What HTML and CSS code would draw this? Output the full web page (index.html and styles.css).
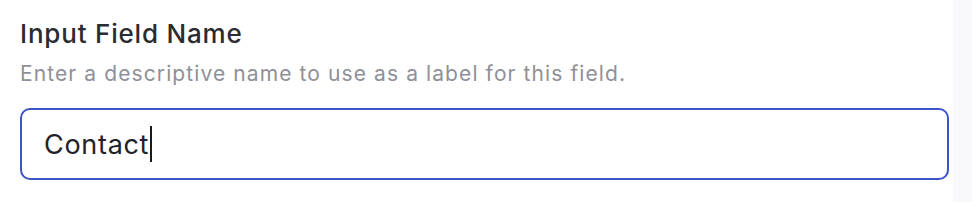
FILE: index.html
```html
<!DOCTYPE html>
<html lang="en">
<head>
    <meta charset="UTF-8">
    <meta name="viewport" content="width=device-width, initial-scale=1.0">
    <title>Input Field Name</title>
    <link rel="stylesheet" href="styles.css">
</head>
<body>
    <div class="panel">
        <div class="field">
            <label class="field-label" for="fieldName">Input Field Name</label>
            <p class="field-help">Enter a descriptive name to use as a label for this field.</p>
            <div class="field-input">
                <span class="field-value">Contact</span><span class="caret"></span>
            </div>
        </div>
        <div class="side"></div>
    </div>
</body>
</html>
```

FILE: styles.css
```css
body {
    margin: 0;
    font-family: Inter, "Noto Sans", sans-serif;
    background-color: #ffffff;
}
.panel {
    display: flex;
    height: 202px;
}
.field {
    width: 953px;
    padding: 19px 4px 0 20px;
    box-sizing: border-box;
}
.side {
    flex: 1;
    background-color: #f9f9fb;
}
.field-label {
    display: block;
    font-size: 26px;
    font-weight: 500;
    letter-spacing: 0.8px;
    color: #2b2b30;
    line-height: 30px;
}
.field-help {
    margin: 13px 0 0;
    font-size: 21px;
    letter-spacing: 1.1px;
    color: #8f8f98;
    line-height: 24px;
}
.field-input {
    margin-top: 22px;
    height: 72px;
    border: 2px solid #3b54c8;
    border-radius: 10px;
    box-sizing: border-box;
    display: flex;
    align-items: center;
    padding-left: 22px;
}
.field-value {
    font-size: 27px;
    letter-spacing: 0.7px;
    color: #222226;
}
.caret {
    width: 2px;
    height: 36px;
    background-color: #1a1a1a;
    margin-left: 1px;
}
```
